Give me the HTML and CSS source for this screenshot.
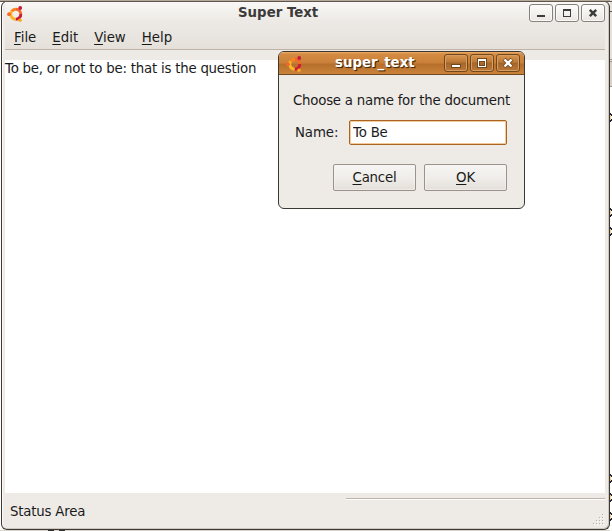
FILE: index.html
```
<!DOCTYPE html>
<html lang="en">
<head>
<meta charset="utf-8">
<title>Super Text</title>
<link rel="stylesheet" href="styles.css">
</head>
<body>
<svg width="0" height="0" class="defs" aria-hidden="true">
  <symbol id="logo" viewBox="0 0 16 16">
    <g fill="none" stroke-width="2.9">
      <path d="M4.6 5.4A5 5 0 0 1 9 3.2" stroke="#f8831f"/>
      <path d="M9 3.2A5 5 0 0 1 13.8 8" stroke="#f4682a"/>
      <path d="M13.8 8A5 5 0 0 1 8.6 13.2" stroke="#cf1a36"/>
      <path d="M8.6 13.2A5 5 0 0 1 4.6 5.4" stroke="#fdb628"/>
    </g>
    <circle cx="2" cy="8.2" r="1.9" fill="#f4682a"/>
    <circle cx="13.2" cy="2" r="1.9" fill="#c51b3a"/>
    <circle cx="13" cy="14.2" r="1.8" fill="#fba91c"/>
  </symbol>
</svg>
<div class="desktop">
  <main class="window">
    <header class="chrome">
      <div class="titlebar">
        <svg class="logo"><use href="#logo"/></svg>
        <h1>Super Text</h1>
        <div class="controls">
          <button aria-label="Minimize"><svg viewBox="0 0 22 16" shape-rendering="crispEdges"><path d="M7 10h8v2H7z" fill="currentColor"/></svg></button>
          <button aria-label="Maximize"><svg viewBox="0 0 22 16" shape-rendering="crispEdges"><path d="M7 4h8v8H7zM8 6v5h6V6z" fill="currentColor" fill-rule="evenodd"/></svg></button>
          <button aria-label="Close"><svg viewBox="0 0 22 16"><path d="M7.8 4.8l6.4 6.4M14.2 4.8l-6.4 6.4" stroke="currentColor" stroke-width="2.4"/></svg></button>
        </div>
      </div>
      <nav class="menu"><span><u>F</u>ile</span><span><u>E</u>dit</span><span><u>V</u>iew</span><span><u>H</u>elp</span></nav>
    </header>
    <section class="editor">To be, or not to be: that is the question</section>
    <footer class="status"><span>Status Area</span><i class="rule"></i>
      <svg class="grip" viewBox="0 0 12 12" shape-rendering="crispEdges"><path d="M9 0h1v1H9zM6 3h1v1H6zM9 3h1v1H9zM3 6h1v1H3zM6 6h1v1H6zM9 6h1v1H9zM0 9h1v1H0zM3 9h1v1H3zM6 9h1v1H6zM9 9h1v1H9z" fill="#b8b0a6"/><path d="M10 1h1v1h-1zM7 4h1v1H7zM10 4h1v1h-1zM4 7h1v1H4zM7 7h1v1H7zM10 7h1v1h-1zM1 10h1v1H1zM4 10h1v1H4zM7 10h1v1H7zM10 10h1v1h-1z" fill="#fff"/></svg>
    </footer>
  </main>
  <svg class="behind" viewBox="0 0 2 531" shape-rendering="crispEdges">
    <path d="M0 0h2v87H0z" fill="#e6e1db"/><path d="M0 1h2v1H0zM0 11h2v1H0z" fill="#605850"/><path d="M0 59h2v1H0zM0 61h2v1H0zM0 86h2v1H0z" fill="#9d958b"/><path d="M0 62h2v24H0z" fill="#d8d1ca"/>
    <g fill="#202030"><path d="M0 113h1v1h1v7H1v1H0z"/><path d="M0 208h1v1h1v7H1v1H0z"/><path d="M0 227h1v1h1v7H1v1H0z"/><path d="M0 474h1v1h1v7H1v1H0z"/><path d="M0 493h1v1h1v7H1v1H0z"/><path d="M0 512h1v1h1v7H1v1H0z"/></g>
    <path d="M0 115h1v5H0zM0 210h1v5H0zM0 229h1v5H0zM0 476h1v5H0zM0 495h1v5H0zM0 514h1v5H0z" fill="#f0cf90"/>
    <path d="M1 116h1v3H1zM1 211h1v3H1zM1 230h1v3H1zM1 477h1v3H1zM1 496h1v3H1zM1 515h1v3H1z" fill="#fff"/>
  </svg>
  <div class="dialog" role="dialog">
    <div class="titlebar active">
      <svg class="logo"><use href="#logo"/></svg>
      <h2>super_text</h2>
      <div class="controls">
        <button aria-label="Minimize"><svg viewBox="0 0 22 16" shape-rendering="crispEdges"><path d="M6 9h10v4H6z" fill="#70481c"/><path d="M7 10h8v2H7z" fill="#fff"/></svg></button>
        <button aria-label="Maximize"><svg viewBox="0 0 22 16" shape-rendering="crispEdges"><path d="M6 3h10v10H6zM9 7v3h4V7z" fill="#70481c" fill-rule="evenodd"/><path d="M7 4h8v8H7zM8 6v5h6V6z" fill="#fff" fill-rule="evenodd"/></svg></button>
        <button aria-label="Close"><svg viewBox="0 0 22 16"><path d="M7.2 4.2l7.6 7.6M14.8 4.2l-7.6 7.6" stroke="#70481c" stroke-width="4"/><path d="M7.5 4.5l7 7M14.5 4.5l-7 7" stroke="#fff" stroke-width="2.4"/></svg></button>
      </div>
    </div>
    <p>Choose a name for the document</p>
    <div class="field"><label for="name">Name:</label><input id="name" type="text" value="To Be"></div>
    <div class="actions"><button><u>C</u>ancel</button><button><u>O</u>K</button></div>
  </div>
</div>
</body>
</html>
```
FILE: styles.css
```
* { box-sizing: border-box; }
body { margin: 0; overflow: hidden; font: 13.33px/16px "DejaVu Sans", sans-serif; color: #1a1a1a; }
.defs { position: absolute; }
h1, h2, p { margin: 0; font-size: inherit; }
button, input { font: inherit; color: inherit; padding: 0; margin: 0; }
u { text-decoration: underline; text-decoration-thickness: 1px; text-underline-offset: 2px; text-decoration-skip-ink: none; }

.desktop {
  position: relative; width: 612px; height: 531px; display: flex;
  padding: 1px 0 1px 1px;
  background: linear-gradient(#b5aa9c 1px, #5e564c 1px, #5e564c 2px, transparent 2px), linear-gradient(#fff, #fff);
}
.desktop::after { content: ""; position: absolute; left: 0; bottom: 0; width: 610px; height: 1px; background: linear-gradient(90deg, #d8d4ce 48px, #333 48px, #333 54px, #d8d4ce 54px, #d8d4ce 59px, #333 59px, #333 65px, #d8d4ce 65px); }
.window {
  width: 609px; height: 529px; display: flex; flex-direction: column;
  padding: 0 4px 0 3px; border: 1px solid #3c3935; border-top-color: #5e564c;
  border-radius: 6px; background: #eeebe7;
  box-shadow: inset 1px 1px #fbfaf8, inset -1px -1px #cdc7bf;
}
.chrome { height: 48px; border-bottom: 1px solid #bfb3a8; background: linear-gradient(#f9f8f6, #edeae6 18px, #e5e0da); margin-bottom: 10px; }
.titlebar { display: flex; align-items: flex-start; height: 25px; }
.logo { width: 16px; height: 16px; flex: none; }
.window .logo { margin: 4px 0 0 2px; }
.window h1 { flex: 1; margin: 3px 0 0 23px; padding-left: 192px; color: #3c3b39; }
.controls { display: flex; gap: 2px; flex: none; }
.window .controls { margin-top: 2px; }
.controls button { width: 24px; height: 18px; display: block; border: 1px solid #85827e; border-radius: 3px; background: linear-gradient(#fdfdfc, #e9e6e2); box-shadow: inset 0 0 0 1px #fbfaf8; color: #3c3b39; }
.controls svg { display: block; width: 22px; height: 16px; }
.menu { display: flex; padding: 3px 0 0 9px; gap: 16px; }
.editor { height: 433px; padding-top: 1px; background: #fff; white-space: nowrap; letter-spacing: -0.22px; }
.status { position: relative; flex: 1; display: flex; align-items: flex-start; padding: 11px 0 0 5px; letter-spacing: -0.2px; }
.rule { position: absolute; left: 341px; right: 0; top: 5px; height: 2px; background: linear-gradient(#bfb3a8 1px, #fff 1px); }
.grip { position: absolute; right: 0; bottom: 3px; width: 12px; height: 12px; }
.behind { width: 2px; height: 531px; margin-top: -1px; flex: none; }

.dialog { position: absolute; left: 278px; top: 51px; width: 247px; height: 158px; border: 1px solid #3c3935; border-radius: 6px; background: #eeebe7; overflow: hidden; }
.active { height: 23px; border-bottom: 1px solid #704a22; background: linear-gradient(#efb06c, #d58b42 2px, #c98038 11px, #b56f2c 12px, #cb8339); }
.active .logo { margin: 4px 0 0 7px; }
.active h2 { flex: 1; margin-left: 33px; margin-top: 3px; color: #fff; text-shadow: 1px 1px 1px #4a2c0c, 1px 1px #5b3a17; }
.active .controls { margin: 2px 4px 0 0; }
.active .controls button { border-color: #70481c; background: linear-gradient(#d79650, #bd7937 7px, #a5662a 8px, #bb7837); box-shadow: inset 0 0 0 1px #d99d60; }
.dialog p { margin: 18px 0 0 14px; white-space: nowrap; letter-spacing: -0.23px; }
.field { display: flex; align-items: center; margin: 11px 0 0 16px; height: 25px; }
.field label { width: 54px; letter-spacing: -0.1px; }
.field input { width: 158px; height: 25px; padding: 0 0 1px 3px; border: 1px solid #a86420; border-radius: 2px; background: #fff; box-shadow: inset 0 0 0 1px #f3cb9b; outline: none; letter-spacing: -0.2px; }
.actions { display: flex; gap: 8px; margin: 19px 0 0 54px; }
.actions button { width: 83px; height: 27px; border: 1px solid #9b938b; border-radius: 2px; background: linear-gradient(#f6f5f3, #f0eeeb 12px, #e4dfd9); box-shadow: inset 0 0 0 1px #f8f6f480; letter-spacing: -0.2px; }
```
